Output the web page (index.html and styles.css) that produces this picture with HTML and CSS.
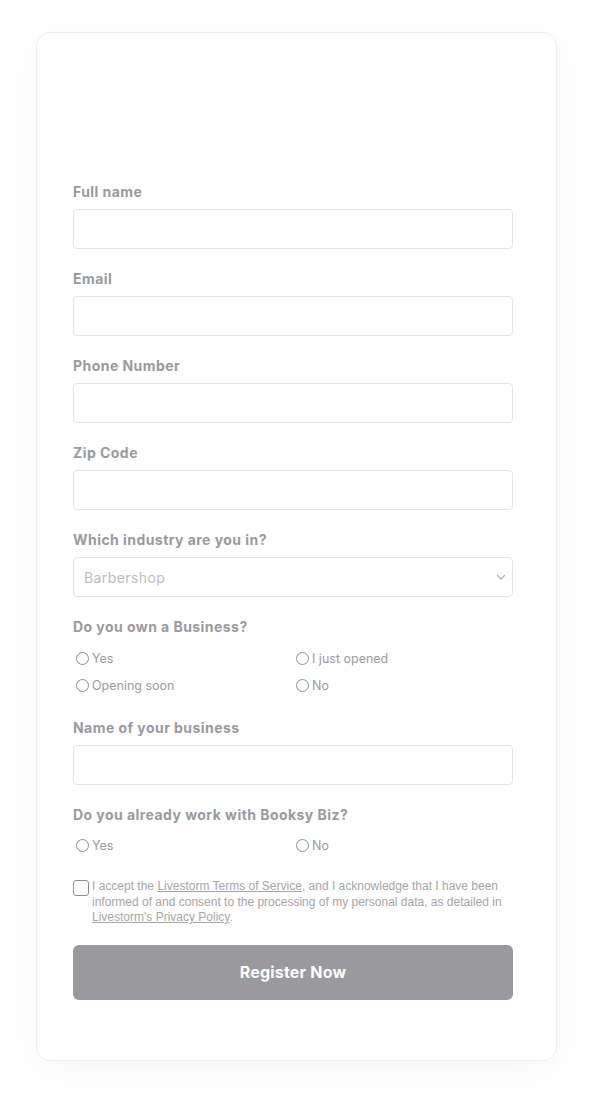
FILE: index.html
```html
<!DOCTYPE html>
<html lang="en">
<head>
<meta charset="utf-8">
<title>Register</title>
<link rel="stylesheet" href="styles.css">
</head>
<body>
<div class="page">
  <div class="card">
    <div class="card-head"></div>
    <form class="form">
      <div class="field">
        <label class="label">Full name</label>
        <div class="input"></div>
      </div>
      <div class="field">
        <label class="label">Email</label>
        <div class="input"></div>
      </div>
      <div class="field">
        <label class="label">Phone Number</label>
        <div class="input"></div>
      </div>
      <div class="field">
        <label class="label">Zip Code</label>
        <div class="input"></div>
      </div>
      <div class="field">
        <label class="label">Which industry are you in?</label>
        <div class="input select">
          <span class="placeholder">Barbershop</span>
          <svg class="chev" width="10" height="6" viewBox="0 0 10 6"><path d="M1 1l4 4 4-4" fill="none" stroke="#b5b5b5" stroke-width="1.3"/></svg>
        </div>
      </div>
      <div class="field field-radio">
        <label class="label">Do you own a Business?</label>
        <div class="radios">
          <div class="radio"><span class="dot"></span>Yes</div>
          <div class="radio"><span class="dot"></span>I just opened</div>
          <div class="radio"><span class="dot"></span>Opening soon</div>
          <div class="radio"><span class="dot"></span>No</div>
        </div>
      </div>
      <div class="field">
        <label class="label">Name of your business</label>
        <div class="input"></div>
      </div>
      <div class="field field-radio2">
        <label class="label">Do you already work with Booksy Biz?</label>
        <div class="radios">
          <div class="radio"><span class="dot"></span>Yes</div>
          <div class="radio"><span class="dot"></span>No</div>
        </div>
      </div>
      <div class="consent">
        <span class="box"></span>
        <p class="consent-text">I accept the <a href="#">Livestorm Terms of Service</a>, and I acknowledge that I have been informed of and consent to the processing of my personal data, as detailed in <a href="#">Livestorm's Privacy Policy</a>.</p>
      </div>
      <button type="button" class="submit">Register Now</button>
    </form>
  </div>
</div>
</body>
</html>
```

FILE: styles.css
```css
* { box-sizing: border-box; }
html, body { margin: 0; padding: 0; background: #ffffff; }
body { font-family: Inter, "Open Sans", sans-serif; }
.page { padding: 32px 36px 44px 36px; }
.card {
  width: 521px;
  height: 1029px;
  background: #fff;
  border: 1px solid #eeeeee;
  border-radius: 14px;
  box-shadow: 0 8px 40px rgba(0,0,0,0.045);
  padding: 0 36px;
}
.card-head { height: 148px; }
.form { display: flex; flex-direction: column; width: 440px; }
.field { display: flex; flex-direction: column; margin-bottom: 19px; }
.label {
  font-size: 14px;
  font-weight: 700;
  color: #9a9a9e;
  line-height: 20px;
  padding-top: 1px;
  margin-bottom: 7px;
  letter-spacing: 0.45px;
}
.input {
  height: 40px;
  border: 1px solid #e4e4e6;
  border-radius: 4px;
  background: #fff;
}
.select { display: flex; align-items: center; justify-content: space-between; padding: 0 6px 0 10px; }
.placeholder { font-size: 14px; color: #bdbdbf; letter-spacing: 0.4px; }
.chev { width: 10px; height: 6px; }
.radios {
  display: grid;
  grid-template-columns: 220px 220px;
  row-gap: 7px;
  margin-top: 3px;
}
.field-radio { margin-bottom: 22px; }
.field-radio .radios { margin-top: 4px; }
.field-radio2 { margin-bottom: 24px; }
.radio {
  display: flex;
  align-items: center;
  font-size: 12.5px;
  color: #9c9c9e;
  height: 20px;
}
.dot {
  width: 13px;
  height: 13px;
  border: 1px solid #8f8f8f;
  border-radius: 50%;
  margin: 0 3px 0 3px;
  flex: none;
}
.consent { display: flex; align-items: flex-start; }
.box {
  width: 16px;
  height: 16px;
  border: 1px solid #8f8f8f;
  border-radius: 3px;
  margin-top: 1px;
  flex: none;
}
.consent-text {
  margin: 0 0 0 3px;
  font-family: "Liberation Sans", Arial, sans-serif;
  font-size: 12px;
  line-height: 15.5px;
  color: #a6a6a8;
}
.consent-text a { color: #a6a6a8; text-decoration: underline; }
.submit {
  margin-top: 19px;
  height: 55px;
  border: none;
  border-radius: 6px;
  background: #9a9a9e;
  color: #fff;
  font-family: Inter, sans-serif;
  font-size: 16px;
  font-weight: 700;
  letter-spacing: 0.2px;
}
```
